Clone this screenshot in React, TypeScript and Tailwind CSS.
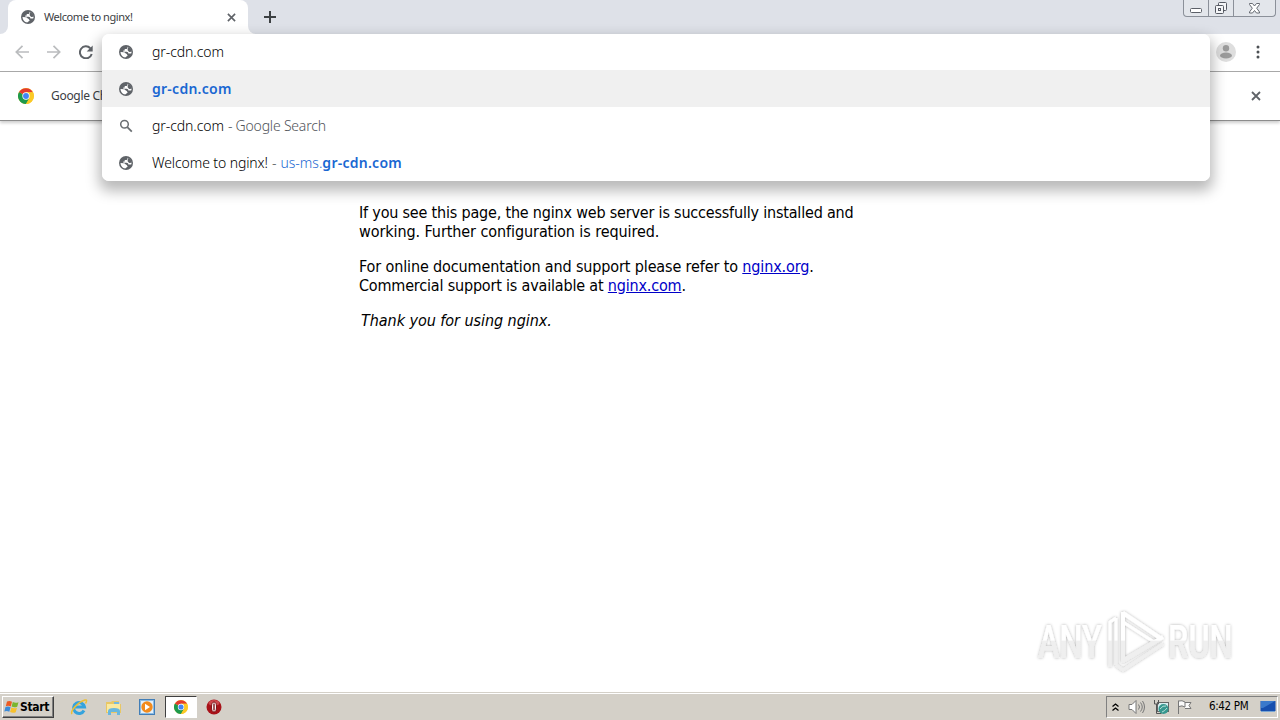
import React from 'react';

const Globe: React.FC<{ className?: string }> = ({ className = '' }) => (
  <svg width="14" height="14" viewBox="0 0 14 14" className={className}>
    <circle cx="7" cy="7" r="7" fill="#5f6368" />
    <path d="M1.500 7 5 7.300c1.400.3 1.600 1.500 2.700 1.600l1 1.500-2.500 2C3.800 12.300 1.600 10 1.500 7Z" fill="#fff" />
    <path d="M8.500 1.700v1.100c0 .9-.7 1.300-1.500 1.300H5.700v1.300H4.300v1.400h3.300c1.200 0 1.700.9 1.700 1.600h2c.9.2 1.200-.300 1.200-1.500-.100-2.300-2-4.700-4-5.200Z" fill="#fff" />
    <path d="M9 2c2.200.7 3.600 2.500 3.700 4.700l-2.600.300-1.500-1.800Z" fill="#5f6368" />
  </svg>
);

const ChromeLogo: React.FC<{ size: number }> = ({ size }) => (
  <svg width={size} height={size} viewBox="0 0 48 48">
    <circle cx="24" cy="24" r="24" fill="#fbc926" />
    <path d="M24 24 3.200 12A24 24 0 0 0 24 48l10.400-18Z" fill="#1e9a4c" />
    <path d="M24 24 3.200 12A24 24 0 0 1 44.800 13H24Z" fill="#e33b2e" />
    <path d="M24 13h20.800A24 24 0 0 1 24 48l10.400-18Z" fill="#fbc926" />
    <circle cx="24" cy="24" r="11" fill="#fff" />
    <circle cx="24" cy="24" r="8.800" fill="#4285f4" />
  </svg>
);

const Close: React.FC<{ size: number }> = ({ size }) => (
  <svg width={size} height={size} viewBox="0 0 10 10" fill="none" stroke="#5f6368" strokeWidth="1.800">
    <path d="m1 1 8 8M9 1 1 9" />
  </svg>
);

const WindowButtons = () => (
  <div className="ml-auto mr-[4px] flex h-[17px] w-[93px] rounded-b-[4px] border border-t-0 border-[#8b9099] bg-[#e3e6eb]">
    <div className="flex w-[25px] items-center justify-center border-r border-[#8b9099]">
      <svg width="13" height="15" viewBox="0 0 13 15"><rect x=".5" y="7.500" width="11" height="4" rx="1" fill="#fff" stroke="#5c6068" /></svg>
    </div>
    <div className="flex w-[25px] items-center justify-center border-r border-[#8b9099]">
      <svg width="14" height="15" viewBox="0 0 14 15" fill="#f4f5f7" stroke="#555962">
        <rect x="4.500" y="1.500" width="8" height="8" rx="1" />
        <rect x="1.500" y="4.500" width="8" height="8" rx="1" />
        <rect x="4.500" y="7.500" width="2" height="2" />
      </svg>
    </div>
    <div className="flex flex-1 items-center justify-center">
      <svg width="13" height="15" viewBox="0 0 13 15">
        <path d="M1.500 2.500h3l2 2.500 2-2.500h3v1L8.700 7.200l2.800 3.800v1h-3l-2-2.500-2 2.500h-3v-1l2.800-3.800L1.500 3.500Z" fill="#fff" stroke="#666a72" />
      </svg>
    </div>
  </div>
);

const Suggestions = () => (
  <div className="absolute left-[102px] top-[34px] h-[147px] w-[1108px] overflow-hidden rounded-[7px] bg-white text-[14px] font-light text-black">
    <div className="flex h-[36px] items-center pl-[17px]">
      <Globe />
      <span className="mb-[2px] ml-[19px] tracking-[-0.08px]">gr-cdn.com</span>
    </div>
    <div className="flex h-[37px] items-center bg-[#f0f0f0] pl-[17px]">
      <Globe />
      <span className="ml-[19px] font-semibold tracking-[0.26px] text-[#1967d2]">gr-cdn.com</span>
    </div>
    <div className="flex h-[37px] items-center pl-[17px]">
      <svg width="14" height="14" viewBox="0 0 14 14" fill="none" stroke="#6b6f73" strokeWidth="1.500">
        <circle cx="5.500" cy="5.300" r="3.800" />
        <path d="m8.300 8.200 4.500 4.500" strokeWidth="1.800" />
      </svg>
      <span className="ml-[19px] tracking-[-0.08px]">gr-cdn.com</span>
      <span className="ml-[4px] tracking-[-0.2px] text-[#50545a]">- Google Search</span>
    </div>
    <div className="flex h-[37px] items-center pl-[17px]">
      <Globe />
      <span className="ml-[19px] tracking-[-0.1px]">Welcome to nginx!</span>
      <span className="ml-[4px] text-[#50545a]">-</span>
      <span className="ml-[4px] text-[#1967d2]">us-ms.</span>
      <span className="font-semibold tracking-[0.26px] text-[#1967d2]">gr-cdn.com</span>
    </div>
  </div>
);

const Watermark = () => (
  <svg className="absolute left-[1030px] top-[602px]" width="214" height="78" viewBox="0 0 214 78">
    <defs>
      <linearGradient id="fade" x1="0" y1="0" x2="0" y2="78" gradientUnits="userSpaceOnUse">
        <stop offset="0.490" stopColor="#fff" />
        <stop offset="0.500" stopColor="#efefef" />
      </linearGradient>
      <linearGradient id="textFade" x1="0" y1="-56" x2="0" y2="22" gradientUnits="userSpaceOnUse">
        <stop offset="0.490" stopColor="#fff" />
        <stop offset="0.500" stopColor="#efefef" />
      </linearGradient>
      <filter id="glow" x="-10%" y="-20%" width="120%" height="140%">
        <feDropShadow dx="0" dy="0" stdDeviation="1.800" floodColor="#000" floodOpacity="0.320" />
      </filter>
    </defs>
    <g filter="url(#glow)">
      <g fill="url(#textFade)" fontFamily="Roboto, sans-serif" fontSize="47" fontWeight="500">
        <text transform="translate(8 56) scale(.69 1)">ANY</text>
        <text transform="translate(138 56) scale(.69 1)">RUN</text>
      </g>
      <g fill="none" stroke="url(#fade)" strokeWidth="4" strokeLinejoin="round">
        <path d="M93 11 131 36.500M93 10v49l40-24" />
        <path d="M80 65V20l6-4M86 16v47M86 63l7 5 40-26M93 20l31 20-31 18" strokeWidth="3" />
      </g>
    </g>
  </svg>
);

const Taskbar = () => (
  <div className="flex h-[28px] items-center border-t border-[#d4d0c8] bg-[#d4d0c8] pt-px shadow-[inset_0_1px_0_#fff] [font-family:'DejaVu_Sans_Condensed','DejaVu_Sans',sans-serif]">
    <div className="ml-[2px] flex h-[22px] w-[52px] items-center border border-b-[#404040] border-l-white border-r-[#404040] border-t-white pl-[1px] shadow-[inset_-1px_-1px_0_#808080]">
      <svg width="16" height="16" viewBox="0 0 16 16">
        <path d="M3 2.500c2-1 3.500-.500 5 .300L6.800 7.500C5 6.500 3.500 6.500 1.800 7.200Z" fill="#ed5b22" />
        <path d="M8.800 3c2 .900 3.500 1 5.700.200l-1.300 4.500c-2 .800-3.700.800-5.600-.100Z" fill="#7ab52e" />
        <path d="M1.500 8c2-.900 3.500-.700 5.100.200l-1.300 4.500c-1.700-1-3.200-1-5-.300Z" fill="#3c8bd8" />
        <path d="M7.400 8.500c2 .900 3.700 1 5.600.200l-1.300 4.500c-2 .800-3.700.700-5.600-.200Z" fill="#f8c12c" />
      </svg>
      <span className="text-[12px] font-bold tracking-[-0.35px] text-black">Start</span>
    </div>
    <div className="ml-[15px] flex w-[20px] justify-center">
      <svg width="18" height="18" viewBox="0 0 18 18" fill="none">
        <path d="M14 12.500A5.500 5.500 0 1 1 14.500 9H5" stroke="#34a3dd" strokeWidth="3" />
        <path d="M2 16C0 13 8 4 15 2c2-.500 2 1 .500 3.500" stroke="#edbf35" strokeWidth="1.500" />
      </svg>
    </div>
    <div className="ml-[14px] flex w-[20px] justify-center">
      <svg width="17" height="17" viewBox="0 0 17 17">
        <path d="M1 3h5l1-1h7v3h2v9H1Z" fill="#e8c765" />
        <path d="M2 5h13v8H2Z" fill="#fae9a0" />
        <path d="M9 3h5v2H9Z" fill="#75b9df" />
        <path d="M3 16v-4c0-2 2-3 6-3s6 1 6 3v4h-3v-3H6v3Z" fill="#68b7df" />
      </svg>
    </div>
    <div className="ml-[14px] flex w-[20px] justify-center">
      <svg width="16" height="16" viewBox="0 0 16 16">
        <rect x=".500" y=".500" width="15" height="15" fill="#8bbce5" stroke="#427eb7" />
        <rect x="2" y="2" width="12" height="12" fill="#e4f0fa" />
        <circle cx="8" cy="8" r="5.700" fill="#f28b1d" />
        <path d="m6 4.700 5 3.300-5 3.300Z" fill="#fff" />
      </svg>
    </div>
    <div className="ml-[8px] flex h-[22px] w-[32px] items-center justify-center border border-b-white border-l-[#404040] border-r-white border-t-[#404040] bg-white">
      <ChromeLogo size={14} />
    </div>
    <div className="ml-[9px]">
      <svg width="16" height="16" viewBox="0 0 16 16">
        <circle cx="8" cy="8" r="7.500" fill="#a81219" />
        <ellipse cx="8" cy="4" rx="5.500" ry="3" fill="#cc474c" />
        <ellipse cx="8" cy="8" rx="2.500" ry="5" fill="#fff" stroke="#7c0e13" />
        <path d="M7.300 4.500h1.400v7H7.300Z" fill="#7c0e13" />
      </svg>
    </div>
    <div className="ml-auto mr-[2px] flex h-[22px] w-[172px] items-center border border-b-white border-l-[#808080] border-r-white border-t-[#808080] pl-[5px]">
      <svg width="7" height="9" viewBox="0 0 7 9" fill="none" stroke="#000" strokeWidth="1.300"><path d="m.5 3.500 3-2.500 3 2.500M.5 7.500l3-2.500 3 2.500" /></svg>
      <svg className="ml-[9px]" width="17" height="16" viewBox="0 0 17 16" fill="none" stroke="#777">
        <path d="M1 5.500h3l4-4v13l-4-4H1Z" fill="#fff" />
        <path d="M10.500 5.500q2 2.500 0 5M12.500 3.500q3.500 4.500 0 9M14.500 2q4 6 0 12" />
      </svg>
      <svg className="ml-[8px]" width="17" height="16" viewBox="0 0 17 16">
        <rect x="4.500" y="3.500" width="11" height="9" fill="#d7eef0" stroke="#666" />
        <path d="M1.500 1v4h4V1M3.500 5v9.500h5" fill="none" stroke="#555" />
        <circle cx="10.500" cy="10" r="5" fill="#36978f" />
        <path d="M7 10q3-4 6-3M9 13q3-1 5-4" fill="none" stroke="#b7ded6" />
      </svg>
      <svg className="ml-[6px]" width="17" height="16" viewBox="0 0 17 16">
        <path d="M2.500 15V1.500M3 2q3-1 6 1v5Q6 6 3 7.500M9 3.500h6l-2 3 2 3H9" fill="#fafafa" stroke="#777" />
      </svg>
      <span className="ml-[16px] text-[11.500px] tracking-[-0.35px] text-black">6:42 PM</span>
      <svg className="ml-auto mr-[1px]" width="16" height="14" viewBox="0 0 16 14">
        <rect x=".500" y="1" width="15" height="10" fill="#174fae" />
        <path d="M1 1h14L3 8H1Z" fill="#3b79cb" />
        <path d="M1 11h14v1H1Z" fill="#79a5d3" />
      </svg>
    </div>
  </div>
);

const App: React.FC = () => (
  <div className="relative flex h-[720px] w-[1280px] flex-col overflow-hidden bg-white text-[#222] [font-family:'Noto_Sans',sans-serif]">
    <div className="flex h-[34px] bg-[#dee1e8]">
      <div className="flex h-[34px] w-[8px] items-end bg-white"><div className="h-full w-full rounded-br-[8px] bg-[#dee1e8]" /></div>
      <div className="flex w-[240px] items-center rounded-t-[8px] bg-white pl-[13px] pr-[12px]">
        <Globe />
        <span className="ml-[9px] text-[11px] tracking-[-0.43px] text-[#3c4043]">Welcome to nginx!</span>
        <span className="ml-auto"><Close size={9} /></span>
      </div>
      <div className="flex h-[34px] w-[8px] bg-white"><div className="h-full w-full rounded-bl-[8px] bg-[#dee1e8]" /></div>
      <svg className="ml-[8px] mt-[11px]" width="12" height="12" viewBox="0 0 12 12" stroke="#3c4043" strokeWidth="2"><path d="M6 0v12M0 6h12" /></svg>
      <WindowButtons />
    </div>
    <div className="flex h-[38px] items-center border-b border-[#aaa] bg-white pb-[2px] pl-[15px]">
      <svg width="14" height="14" viewBox="0 0 14 14" fill="none" stroke="#babcbe" strokeWidth="1.700"><path d="M14 7H1.500M7.500.8 1.300 7l6.200 6.200" /></svg>
      <svg className="ml-[18px]" width="14" height="14" viewBox="0 0 14 14" fill="none" stroke="#babcbe" strokeWidth="1.700"><path d="M0 7h12.500M6.500.8 12.700 7l-6.200 6.200" /></svg>
      <svg className="ml-[18px]" width="14" height="14" viewBox="0 0 14 14"><path d="M11.300 3.200A6 6 0 1 0 12.700 9" fill="none" stroke="#5f6368" strokeWidth="2" /><path d="M13.700.5v6H7.700Z" fill="#5f6368" /></svg>
      <svg className="ml-auto" width="20" height="20" viewBox="0 0 20 20">
        <circle cx="10" cy="10" r="10" fill="#dedede" />
        <circle cx="10" cy="6.200" r="3.200" fill="#9b9b9b" />
        <ellipse cx="10" cy="13.500" rx="6" ry="3" fill="#9b9b9b" />
      </svg>
      <svg className="ml-[20px] mr-[20px]" width="4" height="14" viewBox="0 0 4 14" fill="#4c5054"><circle cx="2" cy="2" r="1.500" /><circle cx="2" cy="7" r="1.500" /><circle cx="2" cy="12" r="1.500" /></svg>
    </div>
    <div className="flex h-[49px] items-center border-b border-[#8c8c8c] bg-white pl-[18px] pr-[19px] shadow-[0_2px_3px_rgba(0,0,0,0.2)]">
      <ChromeLogo size={16} />
      <span className="ml-[17px] text-[12px] tracking-[-0.3px] text-[#3c4043]">Google Chrome</span>
      <span className="ml-auto"><Close size={10} /></span>
    </div>
    <div className="flex-1 pl-[359px] pt-[82px] text-[16px] leading-[19px] text-black [font-family:'DejaVu_Sans_Condensed','DejaVu_Sans',sans-serif]">
      <p>
        <span className="tracking-[-0.19px]">If you see this page, the nginx web server is successfully installed and</span>
        <br />
        <span className="tracking-[-0.08px]">working. Further configuration is required.</span>
      </p>
      <p className="mt-[16px]">
        <span className="tracking-[-0.13px]">For online documentation and support please refer to <a className="text-[#0000c8] underline">nginx.org</a>.</span>
        <br />
        <span className="tracking-[-0.18px]">Commercial support is available at <a className="text-[#0000c8] underline">nginx.com</a>.</span>
      </p>
      <p className="mt-[16px] pl-[2px] italic tracking-[-0.05px]">Thank you for using nginx.</p>
    </div>
    <Taskbar />
    <div className="absolute left-[102px] top-[34px] h-[147px] w-[1108px] rounded-[7px] shadow-[0_7px_14px_3px_rgba(0,0,0,0.28)]" />
    <Suggestions />
    <Watermark />
  </div>
);

export default App;
